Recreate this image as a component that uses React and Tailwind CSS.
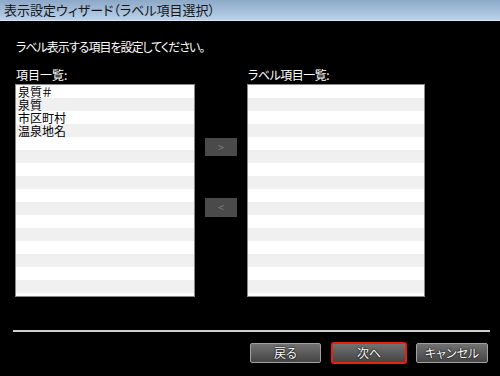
const font = { fontFamily: '"Noto Sans CJK JP", "Noto Sans", sans-serif' };

const ListBox = ({ items, width }) => {
  const rows = Array.from({ length: 17 }, (_, i) => items[i] || "");
  return (
    <div className={`${width} h-[213px] bg-white border border-[#8a8a8a] overflow-hidden`}>
      {rows.map((t, i) => (
        <div
          key={i}
          className={`h-[13px] leading-[13px] text-[12px] text-black pl-[2px] ${i % 2 ? "bg-[#f0f0f0]" : "bg-white"}`}
        >
          {t}
        </div>
      ))}
    </div>
  );
};

const Button = ({ children, width }) => (
  <div
    className={`${width} h-[20px] flex items-center justify-center text-[12px] text-white bg-gradient-to-b from-[#727272] to-[#454545] border border-[#a0a0a0] rounded-[2px] [text-shadow:0_0_2px_#000,0_0_1px_#000]`}
  >
    {children}
  </div>
);

export default function App() {
  return (
    <div className="w-[500px] h-[376px] bg-black flex flex-col [font-feature-settings:'palt']" style={font}>
      <div className="h-[21px] bg-gradient-to-b from-[#8da8c8] to-[#bad2ea] border-b border-[#d8e6f4] pl-[4px] text-[13px] leading-[20px] text-[#151515]">
        表示設定ウィザード（ラベル項目選択）
      </div>

      <div className="mt-[19px] pl-[16px] text-[12px] leading-[14px] tracking-[-1px] text-white">
        ラベル表示する項目を設定してください。
      </div>

      <div className="mt-[14px] flex text-[12px] leading-[14px] text-white">
        <div className="w-[248px] pl-[16px]">項目一覧:</div>
        <div className="tracking-[-0.5px]">ラベル項目一覧:</div>
      </div>

      <div className="mt-[2px] flex pl-[15px]">
        <ListBox items={["泉質＃", "泉質", "市区町村", "温泉地名"]} width="w-[180px]" />
        <div className="w-[52px] flex flex-col items-center">
          <div className="mt-[54px] w-[32px] h-[18px] bg-[#4a4a4a] flex items-center justify-center text-[11px] text-[#7a7a7a]">
            &gt;
          </div>
          <div className="mt-[42px] w-[32px] h-[19px] bg-[#4a4a4a] flex items-center justify-center text-[11px] text-[#7a7a7a]">
            &lt;
          </div>
        </div>
        <ListBox items={[]} width="w-[178px]" />
      </div>

      <div className="mt-[33px] ml-[13px] w-[477px] h-[2px] bg-[#cfcfcf]" />

      <div className="mt-[10px] flex items-center pl-[250px]">
        <Button width="w-[71px]">戻る</Button>
        <div className="ml-[10px] w-[76px] h-[22px] border-2 border-[#e8200c] rounded-[3px] flex">
          <div className="flex-1 flex items-center justify-center text-[12px] text-white bg-gradient-to-b from-[#727272] to-[#454545] [text-shadow:0_0_2px_#000,0_0_1px_#000]">
            次へ
          </div>
        </div>
        <div className="ml-[9px]">
          <Button width="w-[72px]">キャンセル</Button>
        </div>
      </div>
    </div>
  );
}
